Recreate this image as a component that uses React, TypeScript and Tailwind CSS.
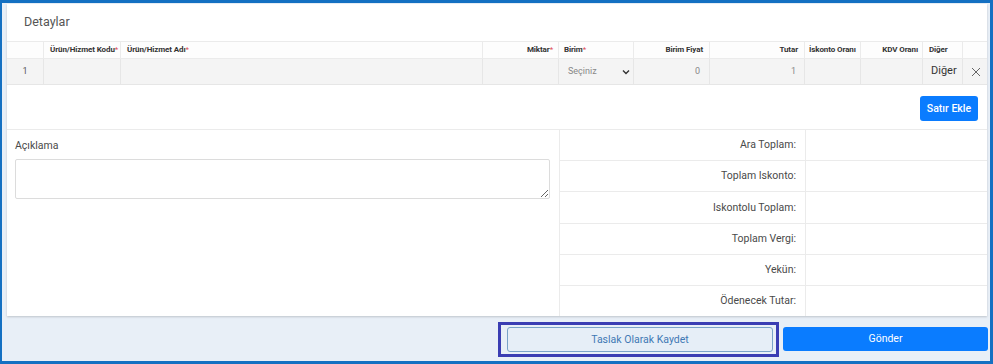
import React from "react";

const cols = "grid grid-cols-[37px_77px_362px_76px_75px_76px_95px_56px_62px_40px_24px]";

function Req() {
  return <span className="text-[#e0505a] font-normal">*</span>;
}

export default function App() {
  const totals = ["Ara Toplam:", "Toplam Iskonto:", "Iskontolu Toplam:", "Toplam Vergi:", "Yekün:", "Ödenecek Tutar:"];
  const hc = "border-r border-[#ebebeb] flex items-center whitespace-nowrap overflow-hidden";
  return (
    <div
      className="w-[993px] h-[364px] overflow-hidden bg-[#e8eff7] border-l-2 border-t-[3px] border-r-[3px] border-b-[3px] border-[#1470c2] flex flex-col pl-[5px] pr-[2px]"
      style={{ fontFamily: "Roboto, 'Liberation Sans', sans-serif" }}
    >
      {/* Card */}
      <div className="mt-[1px] w-[980px] h-[312px] bg-white shadow-[0_1px_2px_rgba(0,0,0,0.18)] flex flex-col">
        <div className="h-[37px] flex items-center pl-[17px] text-[12.5px] text-[#555]">Detaylar</div>
        {/* header */}
        <div className={`${cols} h-[18px] border-t border-b border-[#ebebeb] bg-[#fdfdfd] text-[8px] font-bold text-[#333] tracking-[-0.1px]`}>
          <div className="border-r border-[#ebebeb]" />
          <div className={`${hc} px-[6px]`}>Ürün/Hizmet Kodu<Req /></div>
          <div className={`${hc} px-[6px]`}>Ürün/Hizmet Adı<Req /></div>
          <div className={`${hc} justify-end px-[5px]`}>Miktar<Req /></div>
          <div className={`${hc} px-[5px]`}>Birim<Req /></div>
          <div className={`${hc} justify-end px-[6px]`}>Birim Fiyat</div>
          <div className={`${hc} justify-end px-[6px]`}>Tutar</div>
          <div className={`${hc} px-[4px]`}>İskonto Oranı</div>
          <div className={`${hc} justify-end px-[4px]`}>KDV Oranı</div>
          <div className={`${hc} px-[6px]`}>Diğer</div>
          <div />
        </div>
        {/* data row */}
        <div className={`${cols} h-[26px] border-b border-[#e6e6e6] bg-[#f4f4f4] text-[9px] text-[#888]`}>
          <div className="border-r border-[#e6e6e6] flex items-center justify-center text-[#555]">1</div>
          <div className="border-r border-[#e6e6e6]" />
          <div className="border-r border-[#e6e6e6]" />
          <div className="border-r border-[#e6e6e6]" />
          <div className="border-r border-[#e6e6e6] flex items-center justify-between pl-[9px] pr-[3px]">
            <span>Seçiniz</span>
            <svg width="8" height="6" viewBox="0 0 8 6" fill="none">
              <path d="M1 1.5 L4 4.5 L7 1.5" stroke="#333" strokeWidth="1.4" />
            </svg>
          </div>
          <div className="border-r border-[#e6e6e6] flex items-center justify-end pr-[9px]">0</div>
          <div className="border-r border-[#e6e6e6] flex items-center justify-end pr-[8px]">1</div>
          <div className="border-r border-[#e6e6e6]" />
          <div className="border-r border-[#e6e6e6]" />
          <div className="border-r border-[#e6e6e6] flex items-center pl-[8px] text-[11px] text-[#333]">Diğer</div>
          <div className="flex items-center justify-center pl-[2px]">
            <svg width="10" height="10" viewBox="0 0 10 10" fill="none">
              <path d="M1 1 L9 9 M9 1 L1 9" stroke="#666" strokeWidth="1" />
            </svg>
          </div>
        </div>
        {/* add row */}
        <div className="h-[45px] flex justify-end items-start pt-[11px] pr-[9px] border-b border-[#ebebeb]">
          <button className="h-[25px] w-[58px] rounded-[3px] bg-[#0a7cff] text-white text-[10.5px] font-medium flex items-center justify-center">
            Satır Ekle
          </button>
        </div>
        {/* bottom */}
        <div className="flex-1 grid grid-cols-[552px_428px]">
          <div className="pl-[8px] pr-[9px] pt-[10px] flex flex-col">
            <div className="text-[10.5px] text-[#4a4a4a] h-[12px] leading-[12px]">Açıklama</div>
            <textarea className="mt-[7px] h-[40px] w-[535px] border border-[#dcdcdc] rounded-[2px] outline-none" />
          </div>
          <div className="border-l border-[#ebebeb] flex flex-col">
            {totals.map((t, i) => (
              <div
                key={t}
                className={`grid grid-cols-[246px_182px] flex-1 ${i < totals.length - 1 ? "border-b border-[#ebebeb]" : ""}`}
              >
                <div className="border-r border-[#ebebeb] flex items-center justify-end pr-[9px] text-[10.5px] text-[#4a4a4a]">{t}</div>
                <div />
              </div>
            ))}
          </div>
        </div>
      </div>
      {/* footer buttons */}
      <div className="flex-1 flex justify-end items-start pt-[6px]">
        <div className="w-[281px] h-[35px] border-[3px] border-[#3a3db3] pl-[6px] pr-[3px] pt-[2px]">
          <button className="w-full h-[25px] rounded-[3px] border border-[#7aa3c8] bg-[#e6eef7] text-[#3f78b4] text-[10.5px] flex items-center justify-center">
            Taslak Olarak Kaydet
          </button>
        </div>
        <button className="ml-[4px] mt-[5px] w-[205px] h-[24px] rounded-[3px] bg-[#0a7cff] text-white text-[10.5px] flex items-center justify-center">
          Gönder
        </button>
      </div>
    </div>
  );
}
